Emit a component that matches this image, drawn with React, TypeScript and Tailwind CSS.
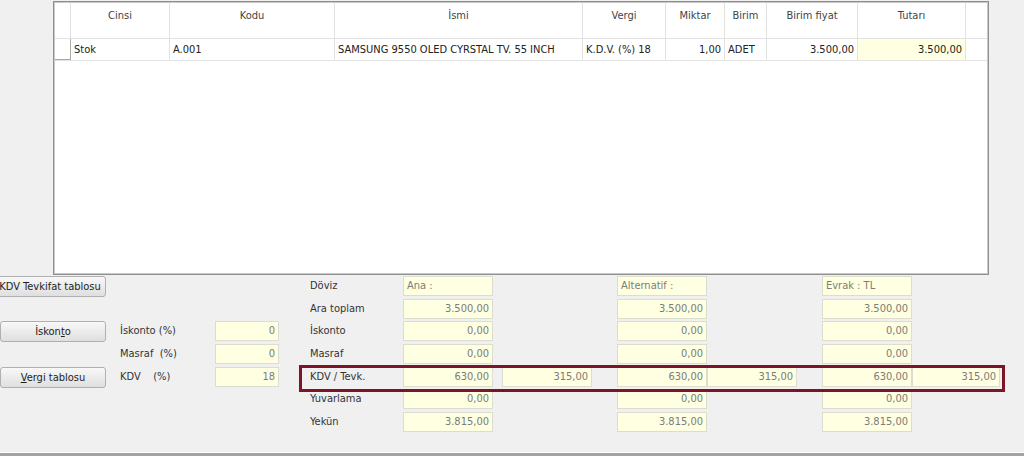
import React from 'react'

const font = { fontFamily: '"DejaVu Sans Condensed", "DejaVu Sans", sans-serif' }

type Col = { label: string; w: string; value?: string; align?: 'left' | 'right'; yellow?: boolean }

const columns: Col[] = [
  { label: 'Cinsi', w: 'w-[99px]', value: 'Stok' },
  { label: 'Kodu', w: 'w-[165px]', value: 'A.001' },
  { label: 'İsmi', w: 'w-[248px]', value: 'SAMSUNG 9550 OLED CYRSTAL TV. 55 INCH' },
  { label: 'Vergi', w: 'w-[83px]', value: 'K.D.V. (%) 18' },
  { label: 'Miktar', w: 'w-[59px]', value: '1,00', align: 'right' },
  { label: 'Birim', w: 'w-[42px]', value: 'ADET' },
  { label: 'Birim fiyat', w: 'w-[91px]', value: '3.500,00', align: 'right' },
  { label: 'Tutarı', w: 'w-[108px]', value: '3.500,00', align: 'right', yellow: true },
]

function Box({ w, children, left }: { w: string; children?: React.ReactNode; left?: boolean }) {
  return (
    <div
      className={`${w} h-[20px] shrink-0 bg-[#ffffe1] border border-[#dcdccf] text-[#7c7c7c] leading-[18px] px-[3px] ${left ? 'text-left' : 'text-right'}`}
    >
      {children}
    </div>
  )
}

function Gap({ w }: { w: string }) {
  return <div className={`${w} shrink-0`} />
}

function Btn({ children, w = 'w-[106px]', className = '' }: { children: React.ReactNode; w?: string; className?: string }) {
  return (
    <button
      className={`${w} ${className} h-[21px] shrink-0 rounded-[3px] border border-[#b0b0b0] bg-gradient-to-b from-[#f8f8f8] to-[#dfdfdf] text-[11px] text-[#1e1e1e] leading-[19px] text-center`}
    >
      {children}
    </button>
  )
}

type Row = {
  left?: React.ReactNode
  pctLabel?: string
  pctValue?: string
  label: string
  a: string
  b?: string
  c: string
  d?: string
  e: string
  f?: string
  header?: boolean
}

const rows: Row[] = [
  {
    left: <Btn w="w-[112px]" className="ml-[-6px]">KDV Tevkifat tablosu</Btn>,
    label: 'Döviz', a: 'Ana :', c: 'Alternatif :', e: 'Evrak : TL', header: true,
  },
  { label: 'Ara toplam', a: '3.500,00', c: '3.500,00', e: '3.500,00' },
  {
    left: <Btn>İskon<span className="underline">t</span>o</Btn>,
    pctLabel: 'İskonto (%)', pctValue: '0',
    label: 'İskonto', a: '0,00', c: '0,00', e: '0,00',
  },
  { pctLabel: 'Masraf  (%)', pctValue: '0', label: 'Masraf', a: '0,00', c: '0,00', e: '0,00' },
  {
    left: <Btn><span className="underline">V</span>ergi tablosu</Btn>,
    pctLabel: 'KDV    (%)', pctValue: '18',
    label: 'KDV / Tevk.', a: '630,00', b: '315,00', c: '630,00', d: '315,00', e: '630,00', f: '315,00',
  },
  { label: 'Yuvarlama', a: '0,00', c: '0,00', e: '0,00' },
  { label: 'Yekün', a: '3.815,00', c: '3.815,00', e: '3.815,00' },
]

export default function App() {
  return (
    <div className="relative w-[1024px] h-[456px] bg-[#f0f0f0] overflow-hidden text-[11px] flex flex-col" style={font}>
      {/* Grid */}
      <div className="ml-[53px] mt-[1px] w-[936px] h-[274px] shrink-0 bg-white border border-[#8f8f8f] shadow-[inset_0_0_0_1px_#c9c9c9] p-[1px]">
        <div className="flex h-[36px] border-b border-[#e2e2e2]">
          <div className="w-[16px] shrink-0 border-r border-[#e2e2e2]" />
          {columns.map((c) => (
            <div key={c.label} className={`${c.w} shrink-0 border-r border-[#e2e2e2] text-center text-[#444] pt-[5px]`}>
              {c.label}
            </div>
          ))}
        </div>
        <div className="flex h-[22px] border-b border-[#e2e2e2]">
          <div className="w-[16px] shrink-0 border-r border-b border-[#a8a8a8] bg-white" />
          {columns.map((c) => (
            <div
              key={c.label}
              className={`${c.w} shrink-0 border-r border-[#e2e2e2] leading-[21px] px-[3px] text-[#222] whitespace-nowrap overflow-hidden ${c.align === 'right' ? 'text-right' : 'text-left'} ${c.yellow ? 'bg-[#ffffe1]' : ''}`}
            >
              {c.value}
            </div>
          ))}
        </div>
      </div>

      {/* Totals */}
      <div className="mt-[1px] flex flex-col gap-[2.67px]">
        {rows.map((r) => (
          <div key={r.label} className="flex h-[20px] items-start">
            <div className="w-[106px] shrink-0 flex">{r.left}</div>
            <Gap w="w-[14px]" />
            <div className="w-[95px] shrink-0 leading-[20px] text-[#333] whitespace-pre">{r.pctLabel}</div>
            {r.pctValue !== undefined ? <Box w="w-[64px]">{r.pctValue}</Box> : <Gap w="w-[64px]" />}
            <Gap w="w-[31px]" />
            <div className="w-[93px] shrink-0 leading-[20px] text-[#333]">{r.label}</div>
            <Box w="w-[90px]" left={r.header}>{r.a}</Box>
            <Gap w="w-[9px]" />
            {r.b ? <Box w="w-[90px]">{r.b}</Box> : <Gap w="w-[90px]" />}
            <Gap w="w-[25px]" />
            <Box w="w-[90px]" left={r.header}>{r.c}</Box>
            {r.d ? <Box w="w-[90px]">{r.d}</Box> : <Gap w="w-[90px]" />}
            <Gap w="w-[25px]" />
            <Box w="w-[90px]" left={r.header}>{r.e}</Box>
            {r.f ? <Box w="w-[88px]">{r.f}</Box> : <Gap w="w-[88px]" />}
          </div>
        ))}
      </div>

      {/* highlight around KDV row */}
      <div className="absolute left-[299px] top-[365px] w-[706px] h-[27px] border-[3px] border-[#7b1527]" />

      <div className="mt-auto h-[4px] border-t border-white bg-[#a3a3a3]" />
    </div>
  )
}
